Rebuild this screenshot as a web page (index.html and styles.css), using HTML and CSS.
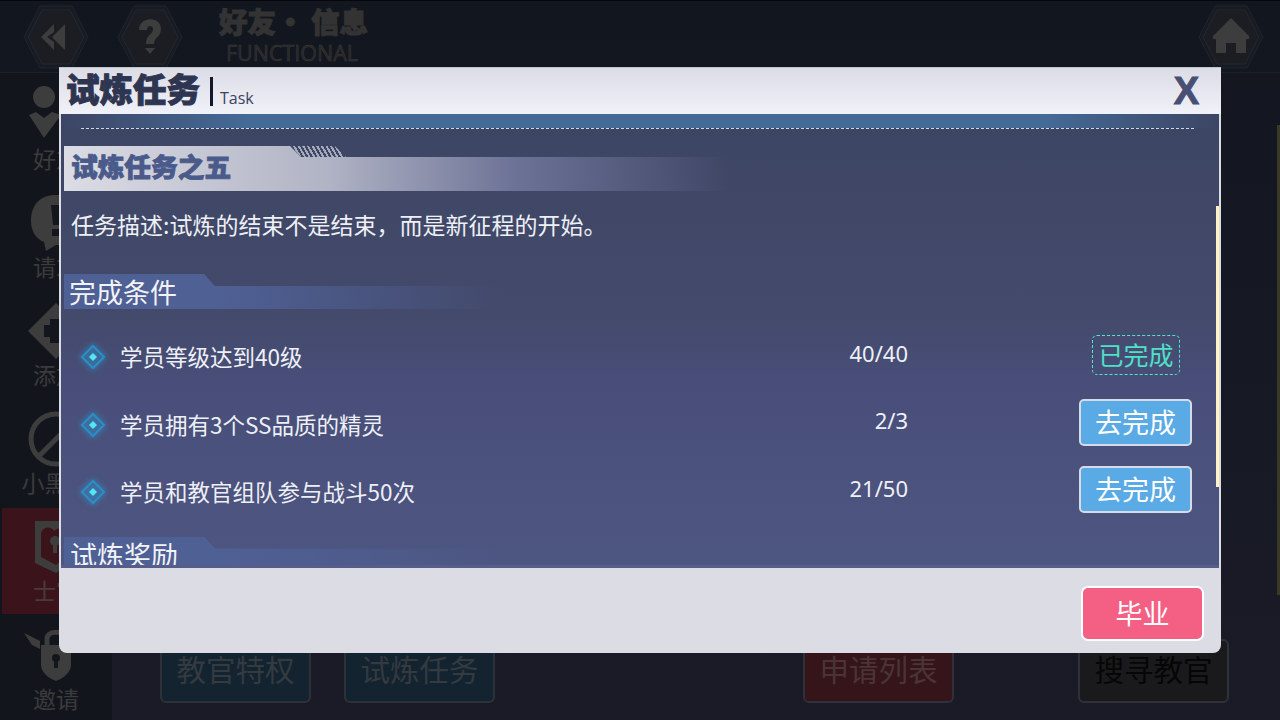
FILE: index.html
```html
<!DOCTYPE html>
<html lang="zh-CN">
<head>
    <meta charset="UTF-8">
    <title>试炼任务</title>
    <link rel="stylesheet" href="styles.css">
</head>
<body>
    <div class="game">
        <header class="topbar">
            <div class="hex-btn">
                <svg viewBox="0 0 66 66"><polygon class="hex" points="17,2 49,2 65,33 49,64 17,64 1,33"/><polygon class="hex-in" points="19,6 47,6 61,33 47,60 19,60 5,33"/><path class="glyph" d="M31 20 L18 33 L31 46 L31 38 L24 33 L31 28 Z M42 20 L29 33 L42 46 Z"/></svg>
            </div>
            <div class="hex-btn">
                <svg viewBox="0 0 66 66"><polygon class="hex" points="17,2 49,2 65,33 49,64 17,64 1,33"/><polygon class="hex-in" points="19,6 47,6 61,33 47,60 19,60 5,33"/><path class="glyph" d="M22 26 C22 12 44 12 44 25 C44 33 37 33 37 40 L29 40 C29 30 36 31 36 25 C36 21 30 21 30 26 Z M28 44 L38 44 L33 50 Z"/></svg>
            </div>
            <div class="topbar-title">
                <div class="topbar-cn">好友· 信息</div>
                <div class="topbar-en">FUNCTIONAL</div>
            </div>
            <div class="hex-btn hex-home">
                <svg viewBox="0 0 66 66"><polygon class="hex" points="17,2 49,2 65,33 49,64 17,64 1,33"/><polygon class="hex-in" points="19,6 47,6 61,33 47,60 19,60 5,33"/><path class="glyph" d="M33 14 L51 32 C52 34 51 36 48 35 L48 49 L38 49 L38 39 L28 39 L28 49 L18 49 L18 35 C15 36 14 34 15 32 Z"/></svg>
            </div>
        </header>

        <div class="main">
            <aside class="sidebar">
                <div class="side-item">
                    <svg viewBox="0 0 56 56"><circle class="glyph" cx="16" cy="10" r="11"/><path class="glyph" d="M1 28 L8 25 L16 31 L24 25 L33 28 L16 51 Z"/></svg>
                    <span>好友</span>
                </div>
                <div class="side-item">
                    <svg viewBox="0 0 56 56"><path class="glyph" d="M28 0 C44 0 56 10 56 26 C56 40 44 50 28 50 L18 56 L16 47 C8 44 3 36 3 26 C3 10 12 0 28 0 Z"/><path class="cut" d="M23 10 L33 10 L31 30 L25 30 Z M24 34 L32 34 L32 41 L24 41 Z"/></svg>
                    <span>请求</span>
                </div>
                <div class="side-item">
                    <svg viewBox="0 0 56 56"><path class="glyph" d="M28 0 L56 28 L28 56 L0 28 Z"/><path class="cut" d="M22 16 L34 16 L34 22 L40 22 L40 34 L34 34 L34 40 L22 40 L22 34 L16 34 L16 22 L22 22 Z"/></svg>
                    <span>添加</span>
                </div>
                <div class="side-item">
                    <svg viewBox="0 0 56 56"><circle class="ring" cx="28" cy="28" r="25"/><path class="ring" d="M10 46 L46 10"/></svg>
                    <span>小黑屋</span>
                </div>
                <div class="side-item is-active">
                    <svg viewBox="0 0 56 56"><path class="glyph" d="M7 2 L50 2 L50 40 L28 54 L7 44 Z"/><path class="cut-red" d="M13 14 C16 6 24 8 26 12 C30 8 40 8 42 16 L42 36 L28 46 L13 38 Z"/><circle class="glyph" cx="27" cy="22" r="5"/><path class="glyph" d="M25 24 L29 24 L29 34 L25 34 Z"/></svg>
                    <span>士官</span>
                </div>
                <div class="side-item">
                    <svg viewBox="0 0 56 56"><path class="ring" d="M19 20 L19 12 C19 3 37 3 37 12 L37 20"/><path class="glyph" d="M13 18 L43 18 L43 38 C43 46 34 52 28 54 C22 52 13 46 13 38 Z"/><path class="glyph" d="M-4 6 L12 14 L12 22 L4 18 Z"/><circle class="cut" cx="28" cy="31" r="4"/><path class="cut" d="M26 33 L30 33 L30 41 L26 41 Z"/></svg>
                    <span>邀请</span>
                </div>
            </aside>

            <div class="content">
                <div class="bottom-btns">
                    <div class="bottom-group">
                        <div class="bottom-btn btn-teal">教官特权</div>
                        <div class="bottom-btn btn-teal">试炼任务</div>
                    </div>
                    <div class="bottom-group group-right">
                        <div class="bottom-btn btn-red">申请列表</div>
                        <div class="bottom-btn btn-black">搜寻教官</div>
                    </div>
                </div>
            </div>
        </div>
        <div class="edge-strip"></div>
    </div>

    <!-- popup -->
    <section class="modal">
        <div class="modal-head">
            <h1>试炼任务</h1>
            <i class="head-bar"></i>
            <span class="head-en">Task</span>
            <span class="close">X</span>
        </div>

        <div class="modal-body">
            <div class="top-band"><div class="dash"></div></div>

            <div class="task-title-wrap">
                <h2 class="task-title">试炼任务之五</h2>
            </div>
            <p class="task-desc">任务描述:试炼的结束不是结束&#xFF0C;而是新征程的开始。</p>

            <h3 class="sub-title">完成条件</h3>

            <ul class="cond-list">
                <li class="cond">
                    <svg class="dia" viewBox="0 0 28 28"><path class="dia-out" d="M14 3 L25 14 L14 25 L3 14 Z"/><path class="dia-in" d="M14 10 L18 14 L14 18 L10 14 Z"/></svg>
                    <span class="cond-name">学员等级达到40级</span>
                    <span class="cond-count">40/40</span>
                    <div class="cond-action"><span class="done">已完成</span></div>
                </li>
                <li class="cond">
                    <svg class="dia" viewBox="0 0 28 28"><path class="dia-out" d="M14 3 L25 14 L14 25 L3 14 Z"/><path class="dia-in" d="M14 10 L18 14 L14 18 L10 14 Z"/></svg>
                    <span class="cond-name">学员拥有3个SS品质的精灵</span>
                    <span class="cond-count">2/3</span>
                    <div class="cond-action"><button class="go-btn">去完成</button></div>
                </li>
                <li class="cond">
                    <svg class="dia" viewBox="0 0 28 28"><path class="dia-out" d="M14 3 L25 14 L14 25 L3 14 Z"/><path class="dia-in" d="M14 10 L18 14 L14 18 L10 14 Z"/></svg>
                    <span class="cond-name">学员和教官组队参与战斗50次</span>
                    <span class="cond-count">21/50</span>
                    <div class="cond-action"><button class="go-btn">去完成</button></div>
                </li>
            </ul>

            <h3 class="sub-title reward">试炼奖励</h3>

            <div class="scrollbar"></div>
        </div>

        <div class="modal-foot">
            <button class="grad-btn">毕业</button>
        </div>
    </section>
</body>
</html>
```

FILE: styles.css
```css
* {
    margin: 0;
    padding: 0;
    box-sizing: border-box;
    font-family: "Noto Sans CJK SC", "Noto Sans", sans-serif;
}

body {
    width: 1280px;
    height: 720px;
    overflow: hidden;
    background: #171a24;
    position: relative;
}

/* page behind the popup */
.game {
    height: 720px;
    display: flex;
    flex-direction: column;
    background: linear-gradient(to bottom, #12161f, #1a1b26);
    overflow: hidden;
}

.topbar {
    height: 73px;
    flex: none;
    display: flex;
    align-items: center;
    padding: 0 16px 0 23px;
    border-top: 1px solid #05070b;
    border-bottom: 1px solid #1b2029;
}

.hex-btn {
    width: 66px;
    height: 66px;
    margin-right: 28px;
}

.hex-btn svg {
    display: block;
    width: 66px;
    height: 66px;
}

.hex {
    fill: #171b23;
    stroke: #20242c;
    stroke-width: 1;
}

.hex-in {
    fill: #1b1d23;
    stroke: #24272d;
    stroke-width: 1;
}

.glyph {
    fill: #3d3d3d;
}

.cut {
    fill: #14161e;
}

.cut-red {
    fill: #3a141a;
}

.ring {
    fill: none;
    stroke: #3d3d3d;
    stroke-width: 5;
}

.topbar-title {
    align-self: flex-start;
    margin-left: 8px;
    padding-top: 4px;
    width: 146px;
    text-align: center;
    flex: none;
}

.topbar-cn {
    font-size: 28.5px;
    font-weight: 900;
    line-height: 32px;
    color: #333333;
    -webkit-text-stroke: 1px #333333;
    white-space: nowrap;
}

.topbar-en {
    margin-top: 3px;
    font-family: "Open Sans", sans-serif;
    font-size: 21.5px;
    line-height: 26px;
    color: #262626;
    -webkit-text-stroke: 0.5px #3b3b3b;
}

.hex-home {
    margin-left: auto;
    margin-right: 0;
}

.main {
    flex: 1;
    display: flex;
    min-height: 0;
}

.sidebar {
    width: 112px;
    flex: none;
    padding-top: 3px;
    background: #13151d;
}

.side-item {
    height: 108px;
    padding-top: 11px;
    display: flex;
    flex-direction: column;
    align-items: center;
    color: #3b3b3b;
    font-size: 23px;
    line-height: 30px;
}

.side-item svg {
    width: 56px;
    height: 56px;
    overflow: visible;
    flex: none;
}

.side-item.is-active {
    height: 106px;
    margin: 0 2px 2px;
    background: #3a141a;
    color: #4b3a3a;
}

.content {
    flex: 1;
    display: flex;
    flex-direction: column;
    justify-content: flex-end;
    padding: 0 51px 17px 48px;
}

.bottom-btns {
    display: flex;
    justify-content: space-between;
}

.bottom-group {
    display: flex;
    gap: 33px;
}

.group-right {
    gap: 124px;
}

.bottom-btn {
    width: 151px;
    height: 64px;
    border: 2px solid #2e3238;
    border-radius: 6px;
    font-size: 29.5px;
    line-height: 54px;
    text-align: center;
    color: #333a40;
}

.btn-teal {
    background: #13232f;
}

.btn-red {
    background: #35141a;
    color: #4a3436;
}

.btn-black {
    background: #1a1a1c;
    color: #060606;
}

.edge-strip {
    position: absolute;
    right: 0;
    top: 125px;
    width: 3px;
    height: 470px;
    background: #3a3826;
}

/* popup */
.modal {
    position: absolute;
    left: 59px;
    top: 67px;
    width: 1162px;
    height: 586px;
    display: flex;
    flex-direction: column;
    background: #dcdce5;
    border-radius: 0 0 8px 8px;
    border-top: 1px solid #c3c4d2;
    padding: 0 2px;
}

.modal-head {
    height: 46px;
    flex: none;
    margin: 0 -2px;
    padding: 0 22px 0 7px;
    display: flex;
    align-items: center;
    background: linear-gradient(to bottom, #dcdce6, #f1f1f9);
}

.modal-head h1 {
    padding-bottom: 7px;
    font-size: 33.5px;
    font-weight: 900;
    line-height: 38px;
    color: #2e3550;
    -webkit-text-stroke: 1px #2e3550;
    white-space: nowrap;
}

.head-bar {
    width: 3px;
    height: 29px;
    margin: 0 7px 0 10px;
    background: #14182a;
}

.head-en {
    align-self: flex-end;
    margin-bottom: 5px;
    font-family: "Open Sans", sans-serif;
    font-size: 16px;
    line-height: 22px;
    color: #3a4260;
}

.close {
    margin-left: auto;
    font-family: "Liberation Sans", sans-serif;
    font-size: 38px;
    font-weight: bold;
    line-height: 46px;
    color: #474f73;
    -webkit-text-stroke: 1px #474f73;
}

.modal-body {
    position: relative;
    height: 454px;
    flex: none;
    overflow: hidden;
    padding-left: 3px;
    background: linear-gradient(to bottom, #3d4564, #434a6b 45%, #484e79 60%, #4d5681);
    border-bottom: 3px solid #565d8a;
}

.top-band {
    height: 14px;
    margin-left: -3px;
    background: linear-gradient(to right, #3d4564, #446a96 16%, #446a96 85%, #3d4564 100%);
}

.dash {
    height: 15px;
    margin: 0 25px 0 20px;
    border-bottom: 1px dashed #cfd6e4;
}

.task-title-wrap {
    position: relative;
    margin-top: 18px;
}

.task-title-wrap::after {
    content: "";
    position: absolute;
    left: 226px;
    top: 0;
    width: 56px;
    height: 11px;
    background: repeating-linear-gradient(60deg, #a5a9bc 0 2px, transparent 2px 4px);
    clip-path: polygon(0 0, 80% 0, 100% 100%, 20% 100%);
}

.task-title {
    width: 665px;
    height: 45px;
    padding: 1px 0 0 7px;
    font-size: 26.7px;
    font-weight: 900;
    line-height: 38px;
    color: #4a5a8a;
    -webkit-text-stroke: 0.8px #4a5a8a;
    background: linear-gradient(to right, #dcdce5 0, #b0b3c4 40%, #6c7296 68%, rgba(70, 78, 112, 0) 100%);
    clip-path: polygon(0 0, 226px 0, 237px 11px, 100% 11px, 100% 100%, 0 100%);
    white-space: nowrap;
}

.task-desc {
    margin-top: 15px;
    padding-left: 7px;
    font-size: 23px;
    line-height: 36px;
    color: #eef0f6;
    white-space: nowrap;
}

.sub-title {
    margin-top: 32px;
    width: 440px;
    height: 35px;
    padding-left: 5px;
    font-size: 27px;
    font-weight: 400;
    line-height: 36px;
    color: #f2f3f8;
    background: linear-gradient(to right, #4f6095, #4f6095 35%, rgba(79, 96, 149, 0) 100%);
    clip-path: polygon(0 0, 140px 0, 151px 12px, 100% 12px, 100% 100%, 0 100%);
    white-space: nowrap;
}

.sub-title.reward {
    margin-top: 13px;
    padding-left: 6px;
}

.cond-list {
    list-style: none;
    margin-top: 12px;
}

.cond {
    height: 67.5px;
    display: flex;
    align-items: center;
    padding-left: 15px;
    padding-right: 27px;
    color: #eef0f6;
}

.dia {
    width: 28px;
    height: 28px;
    flex: none;
    margin-top: 5px;
    filter: drop-shadow(0 0 3px #2aa5e0);
}

.dia-out {
    fill: none;
    stroke: #2a8fc8;
    stroke-width: 2;
}

.dia-in {
    fill: #52e6f5;
}

.cond-name {
    margin-left: 13px;
    margin-top: 3px;
    flex: 1;
    font-size: 22.5px;
    line-height: 32px;
    white-space: nowrap;
}

.cond-count {
    margin-bottom: 4px;
    font-family: "Noto Sans", sans-serif;
    font-size: 22px;
    line-height: 30px;
}

.cond-action {
    width: 284px;
    flex: none;
    display: flex;
    justify-content: flex-end;
    align-items: center;
}

.done {
    width: 88px;
    height: 40px;
    margin-right: 12px;
    border: 1px dashed #4fe6cc;
    border-radius: 5px;
    font-size: 25px;
    line-height: 36px;
    text-align: center;
    color: #4fe0c8;
}

.go-btn {
    width: 113px;
    height: 47px;
    padding-bottom: 2px;
    border: 2px solid #d5dbe8;
    border-radius: 5px;
    background: #5aaae6;
    color: #ffffff;
    font-size: 27px;
    line-height: 41px;
}

.scrollbar {
    position: absolute;
    right: 0;
    top: 92px;
    width: 3px;
    height: 281px;
    background: #fdf3c4;
}

.modal-foot {
    flex: 1;
    display: flex;
    justify-content: flex-end;
    padding: 18px 15px 0 0;
}

.grad-btn {
    width: 123px;
    height: 55px;
    padding-bottom: 2px;
    border: 2px solid #ffffff;
    border-radius: 7px;
    background: #f46084;
    color: #ffffff;
    font-size: 27px;
    line-height: 49px;
}
```
